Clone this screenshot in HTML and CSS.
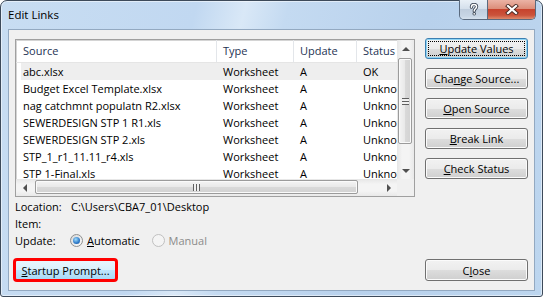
FILE: index.html
```html
<!DOCTYPE html>
<html lang="en">
  <head>
    <meta charset="UTF-8" />
    <meta name="viewport" content="width=device-width, initial-scale=1.0" />
    <title>Edit Links</title>
    <link rel="stylesheet" href="styles.css">
  </head>
  <body>
    <div class="window">
      <div class="titlebar">
        <span class="title">Edit Links</span>
        <div class="caption-buttons">
          <span class="cap help">
            <svg width="10" height="13" viewBox="0 0 10 13">
              <path d="M2.4 4.2C2.4 2.4 3.6 1.5 5 1.5C6.5 1.5 7.6 2.4 7.6 3.8C7.6 5.5 5.2 5.7 5.2 8" fill="none" stroke="#3b4654" stroke-width="3.2" stroke-linecap="round"/>
              <circle cx="5.2" cy="10.8" r="1.7" fill="#3b4654"/>
              <path d="M2.4 4.2C2.4 2.4 3.6 1.5 5 1.5C6.5 1.5 7.6 2.4 7.6 3.8C7.6 5.5 5.2 5.7 5.2 8" fill="none" stroke="#fff" stroke-width="1.5" stroke-linecap="round"/>
              <circle cx="5.2" cy="10.8" r="0.9" fill="#fff"/>
            </svg>
          </span>
          <span class="cap close">
            <svg width="14" height="11" viewBox="0 0 14 11">
              <path d="M3 2L11 9M11 2L3 9" stroke="#4a2a24" stroke-width="4" stroke-linecap="square"/>
              <path d="M3 2L11 9M11 2L3 9" stroke="#fff" stroke-width="2.2" stroke-linecap="square"/>
            </svg>
          </span>
        </div>
      </div>

      <div class="client">
        <div class="main">
          <div class="listbox">
            <div class="list-area">
              <div class="list-header">
                <span class="hcell">Source</span>
                <span class="hcell">Type</span>
                <span class="hcell">Update</span>
                <span class="hcell">Status</span>
              </div>
              <div class="list-rows">
                <div class="row selected"><span>abc.xlsx</span><span>Worksheet</span><span>A</span><span>OK</span></div>
                <div class="row"><span>Budget Excel Template.xlsx</span><span>Worksheet</span><span>A</span><span>Unknown</span></div>
                <div class="row"><span>nag catchmnt populatn R2.xlsx</span><span>Worksheet</span><span>A</span><span>Unknown</span></div>
                <div class="row"><span>SEWERDESIGN STP 1 R1.xls</span><span>Worksheet</span><span>A</span><span>Unknown</span></div>
                <div class="row"><span>SEWERDESIGN STP 2.xls</span><span>Worksheet</span><span>A</span><span>Unknown</span></div>
                <div class="row"><span>STP_1_r1_11.11_r4.xls</span><span>Worksheet</span><span>A</span><span>Unknown</span></div>
                <div class="row"><span>STP 1-Final.xls</span><span>Worksheet</span><span>A</span><span>Unknown</span></div>
              </div>
            </div>
            <div class="vscroll">
              <span class="arrow-box"><span class="arrow up"></span></span>
              <span class="vthumb"><span class="grip-v"></span></span>
              <span class="spacer"></span>
              <span class="arrow-box"><span class="arrow down"></span></span>
            </div>
            <div class="hscroll">
              <span class="arrow-box"><span class="arrow left"></span></span>
              <span class="hthumb"><span class="grip-h"></span></span>
              <span class="spacer"></span>
              <span class="arrow-box"><span class="arrow right"></span></span>
            </div>
            <div class="corner"></div>
          </div>

          <div class="side-buttons">
            <button class="btn btn-default"><span class="focus"><u>U</u>pdate Values</span></button>
            <button class="btn">Cha<u>n</u>ge Source...</button>
            <button class="btn"><u>O</u>pen Source</button>
            <button class="btn"><u>B</u>reak Link</button>
            <button class="btn"><u>C</u>heck Status</button>
          </div>
        </div>

        <div class="info">
          <div class="info-row"><span class="label">Location:</span><span>C:\Users\CBA7_01\Desktop</span></div>
          <div class="info-row"><span class="label">Item:</span></div>
          <div class="info-row">
            <span class="label">Update:</span>
            <span class="option">
              <span class="radio"><span class="dot"></span></span>
              <span><u>A</u>utomatic</span>
            </span>
            <span class="option disabled">
              <span class="radio"></span>
              <span>Manual</span>
            </span>
          </div>
        </div>

        <div class="footer">
          <button class="btn btn-wide btn-hot"><u>S</u>tartup Prompt...</button>
          <button class="btn btn-wide">C<u>l</u>ose</button>
        </div>
      </div>
    </div>
  </body>
</html>
```

FILE: styles.css
```css
* {
  box-sizing: border-box;
}

body {
  margin: 0;
  font-family: "Open Sans", "Noto Sans", sans-serif;
  font-size: 11px;
  color: #000;
}

.window {
  width: 543px;
  height: 297px;
  border: 1px solid #3d4a5a;
  border-radius: 7px 7px 3px 3px;
  background: linear-gradient(104deg, #c8ddf2 0%, #c1d8f1 32%, #d9e8f7 40%, #c4daf1 47%, #b8d1ec 70%, #bdd6ef 100%);
  box-shadow: inset 0 0 0 1px rgba(255, 255, 255, 0.5);
  display: flex;
  flex-direction: column;
}

/* barra de titulo */
.titlebar {
  height: 28px;
  display: flex;
  align-items: flex-start;
  padding-left: 7px;
}

.title {
  line-height: 28px;
  font-size: 11.5px;
}

.caption-buttons {
  margin-left: auto;
  margin-right: 6px;
  margin-top: -1px;
  height: 20px;
  display: flex;
  border: 1px solid #5a6a7e;
  border-top: none;
  border-radius: 0 0 5px 5px;
  overflow: hidden;
}

.cap {
  height: 100%;
  display: flex;
  align-items: center;
  justify-content: center;
}

.help {
  width: 28px;
  border-right: 1px solid #5a6a7e;
  background: linear-gradient(#e9f0f7, #d5e0ec 45%, #bfcddd 50%, #c8d6e5 85%, #d6e2ee);
}

.close {
  width: 47px;
  background: linear-gradient(#ebb3a5, #dc8e7a 45%, #c7432d 50%, #cb533b 80%, #de8a6c);
}

/* zona cliente */
.client {
  flex: 1;
  margin: 0 7px 5px;
  background-color: #f0f0f0;
  border: 1px solid #93a9c1;
  padding: 8px 6px 0 6px;
  display: flex;
  flex-direction: column;
}

.main {
  display: flex;
  align-items: flex-start;
}

.listbox {
  width: 400px;
  height: 158px;
  margin-top: 1px;
  border: 1px solid #a0a0a0;
  box-shadow: inset 1px 1px 0 #d4d4d4;
  background-color: #fff;
  display: grid;
  grid-template-columns: 1fr 17px;
  grid-template-rows: 1fr 17px;
}

.list-area {
  overflow: hidden;
  white-space: nowrap;
}

.list-header {
  display: grid;
  grid-template-columns: 201px 77px 63px 60px;
  height: 23px;
  border-bottom: 1px solid #e5e5e5;
  color: #1e3353;
}

.hcell {
  line-height: 22px;
  padding-left: 6px;
  border-right: 1px solid #e3e6ea;
}

.hcell:first-child {
  padding-left: 7px;
}

.list-rows {
  padding-left: 5px;
}

.row {
  display: grid;
  grid-template-columns: 196px 77px 63px 60px;
  height: 17px;
  line-height: 17px;
}

.row span {
  padding-left: 6px;
  overflow: hidden;
}

.row span:first-child {
  padding-left: 2px;
}

.row.selected {
  background-color: #eeeeee;
}

/* barras de desplazamiento */
.vscroll {
  display: flex;
  flex-direction: column;
  background: linear-gradient(90deg, #e6e6e6, #f4f4f4 30%, #f4f4f4 70%, #e9e9e9);
}

.hscroll {
  display: flex;
  background: linear-gradient(#e6e6e6, #f4f4f4 30%, #f4f4f4 70%, #e9e9e9);
}

.corner {
  background-color: #f0f0f0;
}

.spacer {
  flex: 1;
}

.arrow-box {
  width: 17px;
  height: 17px;
  display: flex;
  align-items: center;
  justify-content: center;
}

.arrow {
  width: 0;
  height: 0;
}

.arrow.up {
  border-left: 4px solid transparent;
  border-right: 4px solid transparent;
  border-bottom: 4px solid #505050;
}

.arrow.down {
  border-left: 4px solid transparent;
  border-right: 4px solid transparent;
  border-top: 4px solid #505050;
}

.arrow.left {
  border-top: 4px solid transparent;
  border-bottom: 4px solid transparent;
  border-right: 4px solid #505050;
}

.arrow.right {
  border-top: 4px solid transparent;
  border-bottom: 4px solid transparent;
  border-left: 4px solid #505050;
}

.vthumb {
  height: 86px;
  margin: 1px 2px 0 1px;
  border: 1px solid #9b9b9b;
  border-radius: 2px;
  background: linear-gradient(90deg, #f4f4f4, #e8e8e8 50%, #d9d9d9 51%, #d2d2d2);
  box-shadow: inset 0 0 0 1px #fafafa;
  display: flex;
  align-items: center;
  justify-content: center;
}

.grip-v {
  width: 7px;
  height: 7px;
  background: repeating-linear-gradient(#5f5f5f 0, #5f5f5f 1px, #f0f0f0 1px, #f0f0f0 3px);
}

.hthumb {
  width: 323px;
  margin: 1px 0 2px 2px;
  border: 1px solid #9b9b9b;
  border-radius: 2px;
  background: linear-gradient(#f4f4f4, #e8e8e8 50%, #d9d9d9 51%, #d2d2d2);
  box-shadow: inset 0 0 0 1px #fafafa;
  display: flex;
  align-items: center;
  justify-content: center;
}

.grip-h {
  width: 7px;
  height: 7px;
  background: repeating-linear-gradient(90deg, #5f5f5f 0, #5f5f5f 1px, #f0f0f0 1px, #f0f0f0 3px);
}

/* botones */
.side-buttons {
  margin-left: 10px;
  display: flex;
  flex-direction: column;
  gap: 9px;
}

.btn {
  width: 103px;
  height: 21px;
  padding: 0;
  font: inherit;
  color: #000;
  border: 1px solid #707070;
  border-radius: 3px;
  background: linear-gradient(#f2f2f2 0%, #ebebeb 50%, #dddddd 51%, #cfcfcf 100%);
  box-shadow: inset 0 0 0 1px #fbfbfb;
  display: flex;
  align-items: center;
  justify-content: center;
  white-space: nowrap;
}

.btn-default {
  border-color: #3c7fb1;
  box-shadow: inset 0 0 0 1px #8fd6f6;
  align-items: stretch;
}

.focus {
  flex: 1;
  margin: 2px;
  border: 1px dotted #000;
  display: flex;
  align-items: center;
  justify-content: center;
}

.btn-wide {
  height: 22px;
}

.btn-hot {
  margin-left: -1px;
  border-color: #3c7fb1;
  background: linear-gradient(#eaf6fd 0%, #d9f0fc 50%, #bee6fd 51%, #a7d9f5 100%);
  outline: 3px solid #ff0000;
  outline-offset: -2px;
}

/* informacion */
.info {
  margin-top: 1px;
}

.info-row {
  height: 17px;
  display: flex;
  align-items: center;
}

.label {
  width: 56px;
}

.option {
  display: flex;
  align-items: center;
  gap: 4px;
  margin-right: 13px;
}

.radio {
  width: 13px;
  height: 13px;
  margin-left: -1px;
  border: 1px solid #8e8f8f;
  border-radius: 50%;
  background: linear-gradient(135deg, #d8d8d8, #fbfbfb);
  display: flex;
  align-items: center;
  justify-content: center;
}

.dot {
  width: 7px;
  height: 7px;
  border-radius: 50%;
  background: radial-gradient(circle at 40% 35%, #9fdcfc, #2c78c8 60%, #1b4f8c);
}

.disabled {
  color: #8b8b8b;
}

.disabled .radio {
  border-color: #c0c0c0;
  background: #f4f4f4;
}

.footer {
  margin-top: 10px;
  display: flex;
  justify-content: space-between;
}
```
